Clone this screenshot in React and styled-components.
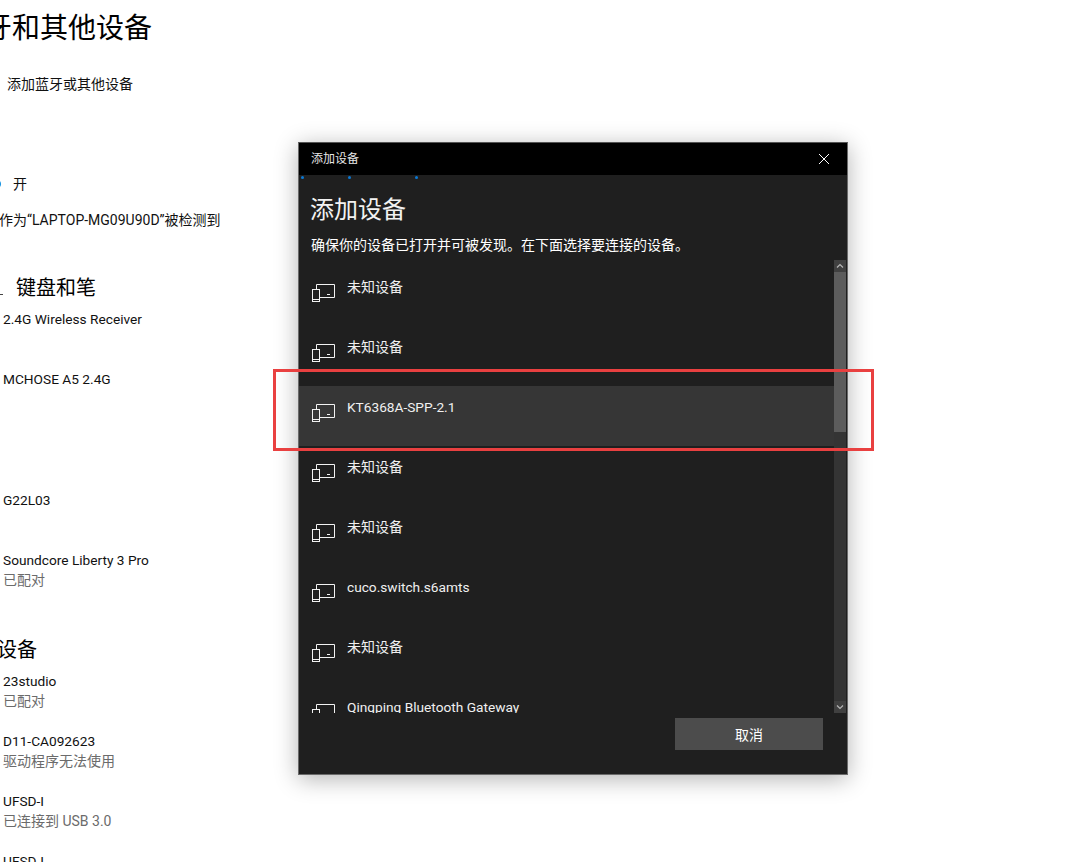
import React from 'react';
import styled, { createGlobalStyle } from 'styled-components';

const FONT = `Roboto, "Noto Sans CJK SC", sans-serif`;

const GlobalStyle = createGlobalStyle`
  html, body {
    margin: 0;
    padding: 0;
    background: #fff;
  }
  body {
    font-family: ${FONT};
  }
`;

const Page = styled.div`
  position: relative;
  width: 1091px;
  height: 862px;
  overflow: hidden;
  background: #fff;
  color: #111;
  font-family: ${FONT};
`;

const Settings = styled.div`
  display: flex;
  flex-direction: column;
  padding-top: 9px;
`;

const PageTitle = styled.h1`
  margin: 0 0 0 -44px;
  font-size: 28px;
  font-weight: 400;
  line-height: 40px;
  white-space: nowrap;
  color: #000;
`;

const AddRow = styled.div`
  margin: 25px 0 0 7px;
  font-size: 14px;
  line-height: 20px;
`;

const ToggleRow = styled.div`
  display: flex;
  align-items: center;
  gap: 12px;
  margin: 80px 0 0 -9px;
  font-size: 14px;
  line-height: 20px;
`;

const ToggleKnob = styled.span`
  width: 10px;
  height: 10px;
  border-radius: 50%;
  background: #0a8ee0;
`;

const Discover = styled.div`
  margin: 16px 0 0 -1px;
  font-size: 14px;
  line-height: 20px;
  white-space: nowrap;
`;

const SectionTitle = styled.h2`
  position: relative;
  margin: ${(p) => p.$top}px 0 ${(p) => p.$bottom}px ${(p) => p.$left}px;
  font-size: 20px;
  font-weight: 400;
  line-height: 28px;
  white-space: nowrap;
  color: #000;
`;

const SectionMark = styled.span`
  position: absolute;
  left: -16px;
  top: 20px;
  width: 3px;
  height: 1px;
  background: #444;
`;

const SideDevice = styled.div`
  height: ${(p) => p.$height || 60}px;
  padding-left: 3px;
  font-size: 14px;
  line-height: 20px;
  flex: none;
`;

const LatinName = styled.div`
  font-size: 13.7px;
`;

const Status = styled.div`
  color: #6b6b6b;
`;

const Dialog = styled.div`
  position: absolute;
  left: 298px;
  top: 142px;
  width: 550px;
  height: 633px;
  box-sizing: border-box;
  display: flex;
  flex-direction: column;
  background: #1f1f1f;
  border: 1px solid #6a6a6a;
  border-top-color: #555;
  box-shadow: 0 4px 22px rgba(0, 0, 0, 0.3);
  color: #fff;
`;

const TitleBar = styled.div`
  flex: none;
  display: flex;
  align-items: center;
  justify-content: space-between;
  height: 32px;
  box-sizing: border-box;
  padding: 0 17px 0 12px;
  background: #000;
  font-size: 12px;
  color: #e6e6e6;
`;

const TitleText = styled.span`
  margin-top: -3px;
`;

const CloseIcon = styled.svg`
  display: block;
  width: 12px;
  height: 12px;
`;

const Dot = styled.span`
  position: absolute;
  top: 33px;
  left: ${(p) => p.$left}px;
  width: 3px;
  height: 3px;
  border-radius: 50%;
  background: #0a78d4;
`;

const Heading = styled.div`
  margin: 18px 0 0 11px;
  font-size: 24px;
  line-height: 34px;
  color: #f2f2f2;
`;

const Description = styled.div`
  margin: 8px 0 0 12px;
  font-size: 14px;
  line-height: 20px;
  color: #fff;
`;

const ListArea = styled.div`
  flex: none;
  display: flex;
  height: 453px;
  margin-top: 5px;
  padding-right: 1px;
`;

const DeviceList = styled.div`
  flex: 1;
  min-width: 0;
  overflow: hidden;
  padding-top: 6px;
`;

const DeviceRow = styled.div`
  display: flex;
  gap: 12px;
  height: 60px;
  padding-left: 12px;
  background: ${(p) => (p.$active ? '#363636' : 'transparent')};
`;

const DeviceGlyph = styled.svg`
  flex: none;
  display: block;
  width: 24px;
  height: 20px;
  margin-top: 17px;
`;

const DeviceName = styled.div`
  padding-top: 11px;
  font-size: ${(p) => (p.$latin ? 13.7 : 14)}px;
  line-height: 20px;
  color: #f0f0f0;
`;

const ScrollBar = styled.div`
  flex: none;
  display: flex;
  flex-direction: column;
  width: 12px;
  background: #343434;
`;

const ScrollButton = styled.div`
  flex: none;
  display: flex;
  align-items: center;
  justify-content: center;
  height: 12px;
  background: #404040;
`;

const ScrollThumb = styled.div`
  flex: none;
  height: 160px;
  background: #5c5c5c;
`;

const ScrollTrack = styled.div`
  flex: 1;
`;

const Footer = styled.div`
  display: flex;
  justify-content: flex-end;
  padding: 5px 24px 0 0;
`;

const CancelButton = styled.button`
  width: 148px;
  height: 32px;
  border: none;
  padding: 0;
  background: #4c4c4c;
  color: #fff;
  font-family: ${FONT};
  font-size: 14px;
`;

const Highlight = styled.div`
  position: absolute;
  left: 273px;
  top: 369px;
  width: 601px;
  height: 82px;
  box-sizing: border-box;
  border: 3px solid #e94040;
  pointer-events: none;
`;

const devices = [
  { name: '未知设备' },
  { name: '未知设备' },
  { name: 'KT6368A-SPP-2.1', latin: true, active: true },
  { name: '未知设备' },
  { name: '未知设备' },
  { name: 'cuco.switch.s6amts', latin: true },
  { name: '未知设备' },
  { name: 'Qingping Bluetooth Gateway', latin: true },
];

function DeviceIcon() {
  return (
    <DeviceGlyph viewBox="0 0 24 20" fill="none" stroke="#f2f2f2" strokeWidth="1">
      <path d="M5.5 6V1.5H23.5V14.5H8.5" />
      <rect x="1.5" y="6.5" width="7" height="12" />
      <path d="M1.5 16.5H8.5" />
      <path d="M16 11.5H19" />
    </DeviceGlyph>
  );
}

export default function App() {
  return (
    <Page>
      <GlobalStyle />
      <Settings>
        <PageTitle>蓝牙和其他设备</PageTitle>
        <AddRow>添加蓝牙或其他设备</AddRow>
        <ToggleRow>
          <ToggleKnob />
          <span>开</span>
        </ToggleRow>
        <Discover>作为“LAPTOP-MG09U90D”被检测到</Discover>
        <SectionTitle $top={44} $bottom={7} $left={16}>
          <SectionMark />
          键盘和笔
        </SectionTitle>
        <SideDevice><LatinName>2.4G Wireless Receiver</LatinName></SideDevice>
        <SideDevice $height={121}><LatinName>MCHOSE A5 2.4G</LatinName></SideDevice>
        <SideDevice><LatinName>G22L03</LatinName></SideDevice>
        <SideDevice $height={86}>
          <LatinName>Soundcore Liberty 3 Pro</LatinName>
          <Status>已配对</Status>
        </SideDevice>
        <SectionTitle $top={0} $bottom={7} $left={-43}>其他设备</SectionTitle>
        <SideDevice>
          <LatinName>23studio</LatinName>
          <Status>已配对</Status>
        </SideDevice>
        <SideDevice>
          <LatinName>D11-CA092623</LatinName>
          <Status>驱动程序无法使用</Status>
        </SideDevice>
        <SideDevice>
          <LatinName>UFSD-I</LatinName>
          <Status>已连接到 USB 3.0</Status>
        </SideDevice>
        <SideDevice><LatinName>UFSD-I</LatinName></SideDevice>
      </Settings>

      <Dialog>
        <TitleBar>
          <TitleText>添加设备</TitleText>
          <CloseIcon viewBox="0 0 12 12" fill="none" stroke="#fff" strokeWidth="1">
            <path d="M1 1L11 11M11 1L1 11" />
          </CloseIcon>
        </TitleBar>
        <Dot $left={2} />
        <Dot $left={49} />
        <Dot $left={116} />
        <Heading>添加设备</Heading>
        <Description>确保你的设备已打开并可被发现。在下面选择要连接的设备。</Description>
        <ListArea>
          <DeviceList>
            {devices.map((d, i) => (
              <DeviceRow key={i} $active={d.active}>
                <DeviceIcon />
                <DeviceName $latin={d.latin}>{d.name}</DeviceName>
              </DeviceRow>
            ))}
          </DeviceList>
          <ScrollBar>
            <ScrollButton>
              <svg width="8" height="6" viewBox="0 0 8 6" fill="none" stroke="#b5b5b5" strokeWidth="1.2">
                <path d="M1 4.5L4 1.5L7 4.5" />
              </svg>
            </ScrollButton>
            <ScrollThumb />
            <ScrollTrack />
            <ScrollButton>
              <svg width="8" height="6" viewBox="0 0 8 6" fill="none" stroke="#b5b5b5" strokeWidth="1.2">
                <path d="M1 1.5L4 4.5L7 1.5" />
              </svg>
            </ScrollButton>
          </ScrollBar>
        </ListArea>
        <Footer>
          <CancelButton>取消</CancelButton>
        </Footer>
      </Dialog>
      <Highlight />
    </Page>
  );
}
